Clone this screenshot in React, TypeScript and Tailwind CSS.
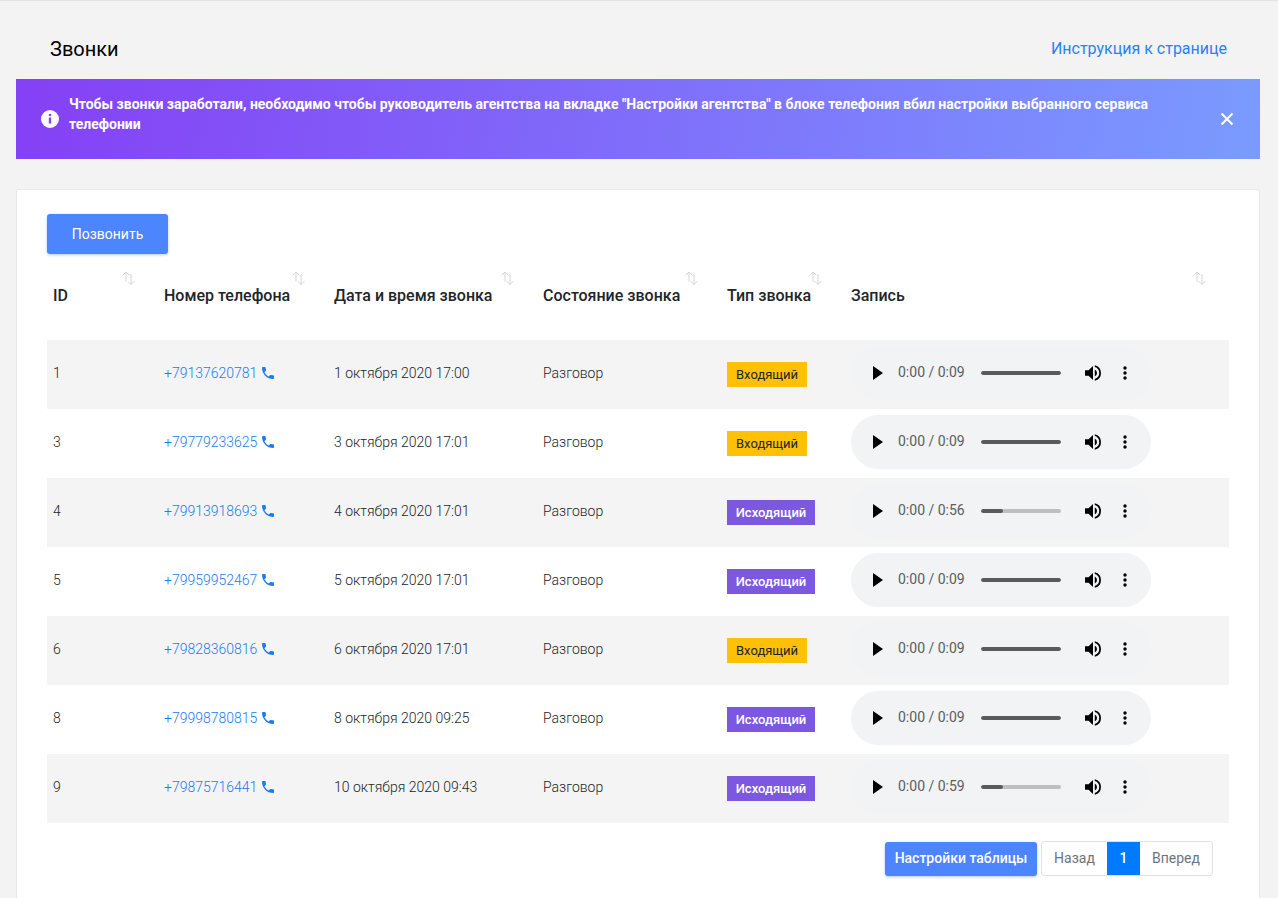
const rows = [
  { id: "1", phone: "+79137620781", date: "1 октября 2020 17:00", type: "in", dur: "0:09", progress: 100 },
  { id: "3", phone: "+79779233625", date: "3 октября 2020 17:01", type: "in", dur: "0:09", progress: 100 },
  { id: "4", phone: "+79913918693", date: "4 октября 2020 17:01", type: "out", dur: "0:56", progress: 28 },
  { id: "5", phone: "+79959952467", date: "5 октября 2020 17:01", type: "out", dur: "0:09", progress: 100 },
  { id: "6", phone: "+79828360816", date: "6 октября 2020 17:01", type: "in", dur: "0:09", progress: 100 },
  { id: "8", phone: "+79998780815", date: "8 октября 2020 09:25", type: "out", dur: "0:09", progress: 100 },
  { id: "9", phone: "+79875716441", date: "10 октября 2020 09:43", type: "out", dur: "0:59", progress: 28 },
];

const headers = ["ID", "Номер телефона", "Дата и время звонка", "Состояние звонка", "Тип звонка", "Запись"];

function SortIcon() {
  return (
    <svg className="absolute top-[6px] right-[23px]" width="13" height="14" viewBox="0 0 13 14" fill="none" stroke="#d4d4d4" strokeWidth="1">
      <path d="M4 10.5V1M0.7 4.3L4 1l3.3 3.3" />
      <path d="M9 3v10.5M5.7 10.2L9 13.5l3.3-3.3" />
    </svg>
  );
}

function PhoneIcon() {
  return (
    <svg className="-translate-y-px" width="16" height="16" viewBox="0 0 24 24" fill="#1a7bf2">
      <path d="M6.62 10.79c1.44 2.83 3.76 5.14 6.59 6.59l2.2-2.2c.27-.27.67-.36 1.02-.24 1.12.37 2.33.57 3.57.57.55 0 1 .45 1 1V20c0 .55-.45 1-1 1-9.39 0-17-7.61-17-17 0-.55.45-1 1-1h3.5c.55 0 1 .45 1 1 0 1.25.2 2.45.57 3.57.11.35.03.74-.25 1.02l-2.2 2.2z" />
    </svg>
  );
}

function Player({ dur, progress }: { dur: string; progress: number }) {
  return (
    <div className="flex h-[54px] w-[300px] items-center rounded-[27px] bg-[#f1f3f4] text-[#1f1f1f]">
      <svg className="ml-[22px]" width="10" height="14" viewBox="0 0 10 14" fill="#000">
        <path d="M0 0l10 7-10 7z" />
      </svg>
      <span className="ml-[15px] w-[67px] -translate-y-px text-[14px] whitespace-nowrap text-[#5b5e61]">0:00 / {dur}</span>
      <div className="ml-[16px] h-[4px] w-[80px] overflow-hidden rounded-full bg-[#bfbfbf]">
        <div className="h-full rounded-full bg-[#5a5a5a]" style={{ width: `${progress}%` }} />
      </div>
      <svg className="ml-[24px]" width="16" height="16" viewBox="3 3 18 18" fill="#000">
        <path d="M3 9v6h4l5 5V4L7 9H3zm13.5 3A4.5 4.5 0 0 0 14 7.97v8.05A4.47 4.47 0 0 0 16.5 12zM14 3.23v2.06a7 7 0 0 1 0 13.42v2.06a9 9 0 0 0 0-17.54z" />
      </svg>
      <svg className="ml-[22px]" width="4" height="14" viewBox="0 0 4 14" fill="#000">
        <circle cx="2" cy="2" r="1.7" />
        <circle cx="2" cy="7" r="1.7" />
        <circle cx="2" cy="12" r="1.7" />
      </svg>
    </div>
  );
}

export default function App() {
  return (
    <div className="h-[898px] overflow-hidden border-t border-[#e2e2e2] bg-[#f3f3f3] pr-[18px] pl-[16px] font-['Roboto',sans-serif]">
      <div className="flex h-[78px] items-start justify-between pr-[33px] pl-[34px] pt-[33px]">
        <h1 className="text-[20px] leading-[30px] font-normal text-black">Звонки</h1>
        <a className="translate-y-[2px] text-[16px] leading-[26px] text-[#2b7ff5]">Инструкция к странице</a>
      </div>

      <div className="flex h-[80px] items-center bg-[linear-gradient(100deg,#8540f5_0%,#7a9bff_100%)] pr-[24px] pl-[25px] text-white">
        <svg className="shrink-0" width="18" height="18" viewBox="0 0 18 18">
          <circle cx="9" cy="9" r="9" fill="#fff" />
          <circle cx="9" cy="5" r="1.3" fill="#8247f6" />
          <rect x="7.8" y="7.5" width="2.4" height="6" fill="#8247f6" />
        </svg>
        <p className="mr-[50px] mb-[10px] ml-[10px] text-[14px] leading-[20px] font-bold">
          Чтобы звонки заработали, необходимо чтобы руководитель агентства на вкладке "Настройки агентства" в блоке телефония вбил настройки выбранного сервиса телефонии
        </p>
        <svg className="shrink-0" width="18" height="18" viewBox="0 0 18 18" stroke="#fff" strokeWidth="2" fill="none">
          <path d="M3.5 3.5l11 11M14.5 3.5l-11 11" />
        </svg>
      </div>

      <div className="mt-[30px] h-[800px] rounded-[2px] border border-[#e8e8e8] bg-white pt-[24px] pr-[30px] pl-[30px]">
        <button className="h-[40px] w-[121px] rounded-[3px] bg-[#4d84ff] text-[14px] text-white shadow-[0_1px_3px_rgba(77,132,255,0.45)]">
          Позвонить
        </button>

        <table className="mt-[11px] w-[1182px] table-fixed border-collapse">
          <colgroup>
            <col className="w-[111px]" />
            <col className="w-[170px]" />
            <col className="w-[209px]" />
            <col className="w-[184px]" />
            <col className="w-[124px]" />
            <col className="w-[384px]" />
          </colgroup>
          <thead>
            <tr className="h-[75px]">
              {headers.map((h) => (
                <th key={h} className="relative px-[6px] pb-[13px] text-left align-middle text-[16px] font-medium text-[#212529]">
                  {h}
                  <SortIcon />
                </th>
              ))}
            </tr>
          </thead>
          <tbody>
            {rows.map((r, i) => (
              <tr key={r.id} className={i % 2 === 0 ? "h-[69px] bg-[#f4f4f4]" : "h-[69px] bg-white"}>
                <td className="px-[6px] pb-[2px] text-[14px] font-light text-[#212529]">{r.id}</td>
                <td className="px-[6px] pb-[2px]">
                  <span className="flex items-center gap-[3px] text-[14px] font-light text-[#1a7bf2]">
                    {r.phone}
                    <PhoneIcon />
                  </span>
                </td>
                <td className="px-[6px] pb-[2px] text-[14px] font-light text-[#212529]">{r.date}</td>
                <td className="px-[6px] pb-[2px] text-[14px] font-light text-[#212529]">Разговор</td>
                <td className="px-[6px]">
                  {r.type === "in" ? (
                    <span className="inline-block h-[25px] bg-[#ffc107] px-[9px] text-[13px] leading-[25px] font-normal text-[#212529]">Входящий</span>
                  ) : (
                    <span className="inline-block h-[25px] w-[88px] bg-[#7b58df] text-center text-[13px] leading-[25px] font-medium text-white">Исходящий</span>
                  )}
                </td>
                <td className="px-[6px] pt-[6px] pb-[9px]">
                  <Player dur={r.dur} progress={r.progress} />
                </td>
              </tr>
            ))}
          </tbody>
        </table>

        <div className="mt-[18px] flex items-center justify-end pr-[16px]">
          <button className="h-[34px] w-[152px] rounded-[3px] bg-[#4d84ff] text-[14px] font-medium text-white shadow-[0_1px_3px_rgba(77,132,255,0.45)]">
            Настройки таблицы
          </button>
          <div className="ml-[4px] flex h-[35px] overflow-hidden rounded-[3px] border border-[#dee2e6] text-[14px] text-[#6c757d]">
            <span className="flex w-[65px] items-center justify-center">Назад</span>
            <span className="-my-px flex w-[33px] items-center justify-center bg-[#007bff] font-medium text-white">1</span>
            <span className="flex w-[72px] items-center justify-center">Вперед</span>
          </div>
        </div>
      </div>
    </div>
  );
}
